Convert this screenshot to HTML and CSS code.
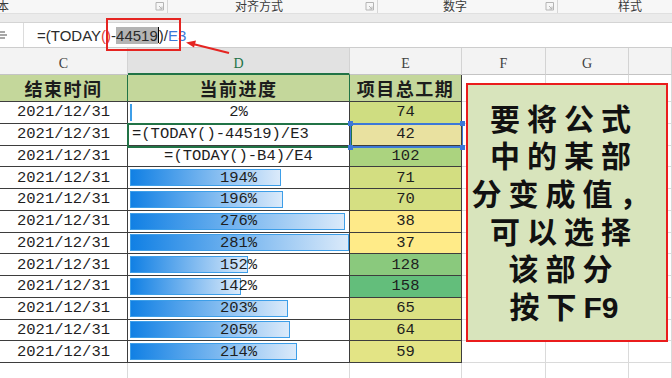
FILE: index.html
```html
<!DOCTYPE html>
<html lang="zh-CN">
<head>
    <meta charset="UTF-8">
    <meta name="viewport" content="width=device-width, initial-scale=1.0">
    <title>进度表</title>
    <link rel="stylesheet" href="styles.css">
</head>
<body>

    <!-- 功能区底部 -->
    <div class="ribbon">
        <div class="group g1">
            <span class="glabel">本</span>
            <span class="launch"><svg width="9" height="9" viewBox="0 0 9 9"><path d="M1 .5h7.5V8M1 .5V8h7.5" fill="none" stroke="#b5b5b5"/><path d="M4 4l3 3M7 4.5V7H4.5" fill="none" stroke="#b5b5b5"/></svg></span>
        </div>
        <div class="group g2">
            <span class="glabel">对齐方式</span>
            <span class="launch"><svg width="9" height="9" viewBox="0 0 9 9"><path d="M1 .5h7.5V8M1 .5V8h7.5" fill="none" stroke="#b5b5b5"/><path d="M4 4l3 3M7 4.5V7H4.5" fill="none" stroke="#b5b5b5"/></svg></span>
        </div>
        <div class="group g3">
            <span class="glabel">数字</span>
            <span class="launch"><svg width="9" height="9" viewBox="0 0 9 9"><path d="M1 .5h7.5V8M1 .5V8h7.5" fill="none" stroke="#b5b5b5"/><path d="M4 4l3 3M7 4.5V7H4.5" fill="none" stroke="#b5b5b5"/></svg></span>
        </div>
        <div class="group g4">
            <span class="glabel">样式</span>
        </div>
    </div>
    <div class="band"></div>

    <!-- 编辑栏 -->
    <div class="fbar">
        <div class="fx"><svg width="10" height="14" viewBox="0 0 10 14"><path d="M0 4h5M0 7h7M0 10h5" stroke="#8a8a8a" stroke-width="1.4"/></svg></div>
        <div class="ftext">=(TODAY<span class="p-red">(</span><span class="p-red">)</span>-<span class="hl">44519</span><span class="caret"></span>)/<span class="ref">E3</span></div>
    </div>

    <!-- 表格 -->
    <div class="sheet">
        <div class="ch">C</div>
        <div class="ch ch-on">D</div>
        <div class="ch">E</div>
        <div class="ch">F</div>
        <div class="ch">G</div>
        <div class="ch"></div>

        <div class="th">结束时间</div>
        <div class="th th-on">当前进度</div>
        <div class="th">项目总工期</div>
        <div class="gc"></div><div class="gc"></div><div class="gc"></div>

        <div class="td">2021/12/31</div>
        <div class="td bar-cell"><span class="bar" style="width:2px"></span><span class="pct">2%</span></div>
        <div class="td" style="background:#cfdd81">74</div>
        <div class="gc"></div><div class="gc"></div><div class="gc"></div>

        <div class="td">2021/12/31</div>
        <div class="td editing">=(TODAY()-44519)/E3</div>
        <div class="td" style="background:#e9e1a0">42</div>
        <div class="gc"></div><div class="gc"></div><div class="gc"></div>

        <div class="td">2021/12/31</div>
        <div class="td">=(TODAY()-B4)/E4</div>
        <div class="td" style="background:#abd37f">102</div>
        <div class="gc"></div><div class="gc"></div><div class="gc"></div>

        <div class="td">2021/12/31</div>
        <div class="td bar-cell"><span class="bar" style="width:151px"></span><span class="pct">194%</span></div>
        <div class="td" style="background:#d3de81">71</div>
        <div class="gc"></div><div class="gc"></div><div class="gc"></div>

        <div class="td">2021/12/31</div>
        <div class="td bar-cell"><span class="bar" style="width:153px"></span><span class="pct">196%</span></div>
        <div class="td" style="background:#d5df82">70</div>
        <div class="gc"></div><div class="gc"></div><div class="gc"></div>

        <div class="td">2021/12/31</div>
        <div class="td bar-cell"><span class="bar" style="width:215px"></span><span class="pct">276%</span></div>
        <div class="td" style="background:#feea89">38</div>
        <div class="gc"></div><div class="gc"></div><div class="gc"></div>

        <div class="td">2021/12/31</div>
        <div class="td bar-cell"><span class="bar" style="width:219px"></span><span class="pct">281%</span></div>
        <div class="td" style="background:#ffeb88">37</div>
        <div class="gc"></div><div class="gc"></div><div class="gc"></div>

        <div class="td">2021/12/31</div>
        <div class="td bar-cell"><span class="bar" style="width:118px"></span><span class="pct">152%</span></div>
        <div class="td" style="background:#8ac97d">128</div>
        <div class="gc"></div><div class="gc"></div><div class="gc"></div>

        <div class="td">2021/12/31</div>
        <div class="td bar-cell"><span class="bar" style="width:111px"></span><span class="pct">142%</span></div>
        <div class="td" style="background:#63be7b">158</div>
        <div class="gc"></div><div class="gc"></div><div class="gc"></div>

        <div class="td">2021/12/31</div>
        <div class="td bar-cell"><span class="bar" style="width:158px"></span><span class="pct">203%</span></div>
        <div class="td" style="background:#dbe183">65</div>
        <div class="gc"></div><div class="gc"></div><div class="gc"></div>

        <div class="td">2021/12/31</div>
        <div class="td bar-cell"><span class="bar" style="width:160px"></span><span class="pct">205%</span></div>
        <div class="td" style="background:#dde283">64</div>
        <div class="gc"></div><div class="gc"></div><div class="gc"></div>

        <div class="td">2021/12/31</div>
        <div class="td bar-cell"><span class="bar" style="width:167px"></span><span class="pct">214%</span></div>
        <div class="td" style="background:#e3e485">59</div>
        <div class="gc"></div><div class="gc"></div><div class="gc"></div>

        <div class="gc"></div><div class="gc"></div><div class="gc"></div>
        <div class="gc"></div><div class="gc"></div><div class="gc"></div>
    </div>

    <!-- 覆盖层: 选区、标注、文本框 -->
    <div class="edit-box"></div>
    <div class="sel-box">
        <span class="hd hd-tl"></span><span class="hd hd-tr"></span>
        <span class="hd hd-bl"></span><span class="hd hd-br"></span>
    </div>
    <div class="mark-box"></div>
    <svg class="arrow" width="50" height="20" viewBox="0 0 50 20">
        <path d="M46 16L10 7" stroke="#e52421" stroke-width="2" fill="none"/>
        <path d="M3 5.5L13 3.5L11 10.5Z" fill="#e52421"/>
    </svg>

    <div class="note">
        <div>要将公式</div>
        <div>中的某部</div>
        <div>分变成值，</div>
        <div>可以选择</div>
        <div>该部分</div>
        <div>按下<span class="key">F9</span></div>
    </div>

</body>
</html>
```

FILE: styles.css
```css
body {
    margin: 0;
    width: 672px;
    height: 378px;
    overflow: hidden;
    position: relative; /* 覆盖层定位 */
    background-color: #fff;
    font-family: "Liberation Sans", "Noto Sans CJK SC", sans-serif;
}

/* 功能区 */
.ribbon {
    height: 13px;
    background-color: #f7f7f7;
    display: flex;
    font-family: "Noto Sans CJK SC", sans-serif;
    font-size: 12px;
    color: #3a3a3a;
    overflow: hidden;
}
.group {
    display: flex;
    align-items: center;
    justify-content: space-between;
    box-sizing: border-box;
    height: 13px;
}
.g1 { width: 168px; }
.g2 { width: 210px; padding-left: 67px; }
.g3 { width: 180px; padding-left: 65px; }
.g4 { flex: 1; padding-left: 60px; }
.g1 .glabel { margin-left: -3px; }
.glabel {
    line-height: 12px;
    margin-top: -2px;
}
.launch {
    display: flex;
    align-items: center;
    height: 13px;
    padding-right: 3px;
    border-right: 1px solid #d6d6d6;
}
.band {
    height: 10px;
    background-color: #ebebeb;
    border-top: 1px solid #e0e0e0;
    border-bottom: 1px solid #d4d4d4;
    box-sizing: border-box;
}

/* 编辑栏 */
.fbar {
    height: 25px;
    display: flex;
    align-items: center;
    border-bottom: 1px solid #cdcdcd;
    box-sizing: border-box;
}
.fx {
    width: 24px;
    height: 100%;
    box-sizing: border-box;
    border-right: 1px solid #dcdcdc;
    display: flex;
    align-items: center;
}
.ftext {
    padding-left: 13px;
    font-size: 15px;
    color: #2b2b2b;
    display: flex;
    align-items: center;
    white-space: pre;
}
.p-red { color: #e0443a; }
.hl { background-color: #b4b4b4; }
.caret {
    display: inline-block;
    width: 1px;
    height: 16px;
    background-color: #000;
}
.ref { color: #3c78d8; }

/* 表格 */
.sheet {
    display: grid;
    grid-template-columns: 128px 222px 112px 84px 83px 43px;
    grid-template-rows: 27px 27px repeat(13, 21.75px);
}
.ch {
    background-color: #f3f3f3;
    border-right: 1px solid #d3d3d3;
    border-bottom: 1px solid #c4c4c4;
    display: flex;
    align-items: center;
    justify-content: center;
    font-family: "Liberation Serif", serif;
    font-size: 14px;
    color: #404040;
    padding-top: 6px;
    box-sizing: border-box;
}
.ch-on {
    background-color: #e2e2e2;
    color: #217346;
    border-bottom: 2px solid #217346;
}
.th {
    background-color: #c4d79b;
    border-right: 1px solid #3d3d3d;
    border-bottom: 1px solid #3d3d3d;
    display: flex;
    align-items: center;
    justify-content: center;
    font-family: "Noto Sans CJK SC", sans-serif;
    font-weight: 700;
    font-size: 18px;
    letter-spacing: 1.5px;
    color: #1c1c1c;
}
.th-on {
    border-left: 1px solid #217346;
    border-right: 1px solid #217346;
    margin-left: -1px;
}
.td {
    border-right: 1px solid #3d3d3d;
    border-bottom: 1px solid #3d3d3d;
    display: flex;
    align-items: center;
    justify-content: center;
    font-family: "Liberation Mono", monospace;
    font-size: 15.5px;
    color: #1e1e1e;
    white-space: pre;
    overflow: hidden;
}
.editing {
    justify-content: flex-start;
    padding-left: 4px;
}
.bar-cell {
    display: grid;
    grid-template-columns: 1fr;
    justify-content: stretch;
    align-items: center;
}
.bar {
    grid-area: 1 / 1;
    justify-self: start;
    height: 17px;
    margin-left: 2px;
    box-sizing: border-box;
    border: 1px solid #3d9ee8;
    background: linear-gradient(to right, #1180e4, #dbeafa);
}
.pct {
    grid-area: 1 / 1;
    text-align: center;
}
.gc {
    border-right: 1px solid #dadada;
    border-bottom: 1px solid #dadada;
}

/* 覆盖层 */
.edit-box {
    position: absolute;
    left: 127px;
    top: 123px;
    width: 225px;
    height: 25px;
    border: 2px solid #217346;
    box-sizing: border-box;
}
.sel-box {
    position: absolute;
    left: 350px;
    top: 123px;
    width: 113px;
    height: 25px;
    border: 1px solid #3c78d8;
    border-width: 2px 1px;
    box-sizing: border-box;
}
.hd {
    position: absolute;
    width: 5px;
    height: 5px;
    background-color: #3c78d8;
}
.hd-tl { left: -3px; top: -4px; }
.hd-tr { right: -3px; top: -4px; }
.hd-bl { left: -3px; bottom: -4px; }
.hd-br { right: -3px; bottom: -4px; }
.mark-box {
    position: absolute;
    left: 106px;
    top: 18px;
    width: 75px;
    height: 33px;
    border: 2px solid #e52421;
    box-sizing: border-box;
}
.arrow {
    position: absolute;
    left: 183px;
    top: 37px;
}

/* 文本框 */
.note {
    position: absolute;
    left: 466px;
    top: 83px;
    width: 202px;
    height: 259px;
    box-sizing: border-box;
    border: 2px solid #ea1c1c;
    background-color: #d8e4bc;
    display: flex;
    flex-direction: column;
    align-items: center;
    justify-content: center;
    padding-right: 6px;
    font-family: "Noto Sans CJK SC", sans-serif;
    font-weight: 700;
    font-size: 30px;
    letter-spacing: 7px;
    line-height: 37.6px;
    color: #111;
    white-space: nowrap;
}
.key {
    font-family: "Liberation Sans", sans-serif;
    font-weight: 700;
    letter-spacing: 0;
}
```
